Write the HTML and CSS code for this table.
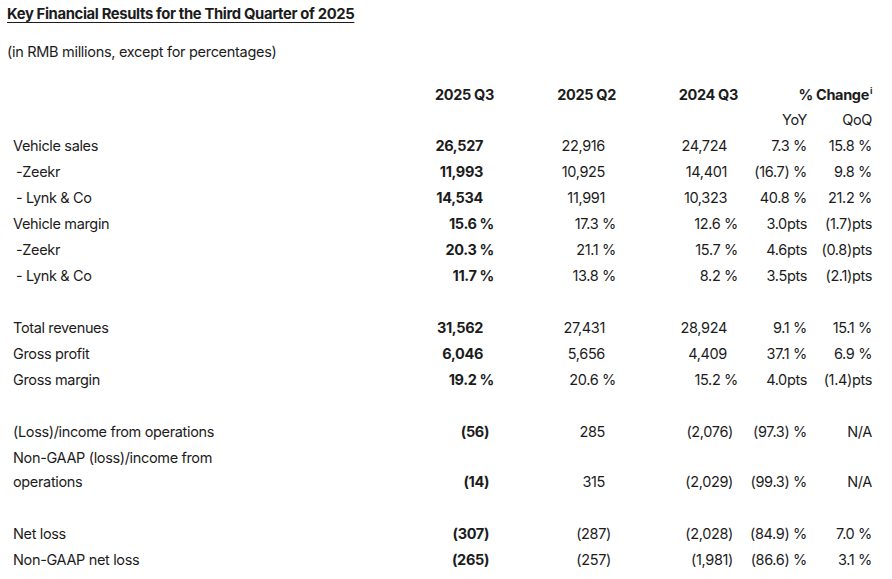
FILE: index.html
```html
<!DOCTYPE html>
<html lang="en">

<head>
    <meta charset="UTF-8">
    <meta name="viewport" content="width=device-width, initial-scale=1.0">
    <title>Key Financial Results</title>
    <link rel="stylesheet" href="styles.css">
</head>

<body>
    <h1 class="title">Key Financial Results for the Third Quarter of 2025</h1>
    <p class="unit">(in RMB millions, except for percentages)</p>

    <table class="results">
        <colgroup>
            <col class="c-label">
            <col class="c-q3">
            <col class="c-q2">
            <col class="c-ly">
            <col class="c-yoy">
            <col class="c-qoq">
        </colgroup>
        <tr class="head">
            <th></th>
            <th>2025 Q3</th>
            <th>2025 Q2</th>
            <th>2024 Q3</th>
            <th colspan="2">% Change<sup>i</sup></th>
        </tr>
        <tr class="subhead">
            <td></td>
            <td></td>
            <td></td>
            <td></td>
            <td>YoY</td>
            <td>QoQ</td>
        </tr>
        <tr>
            <td class="label">Vehicle sales</td>
            <td class="cur n">26,527</td>
            <td class="n">22,916</td>
            <td class="n">24,724</td>
            <td>7.3 %</td>
            <td>15.8 %</td>
        </tr>
        <tr>
            <td class="label sub">-Zeekr</td>
            <td class="cur n">11,993</td>
            <td class="n">10,925</td>
            <td class="n">14,401</td>
            <td>(16.7) %</td>
            <td>9.8 %</td>
        </tr>
        <tr>
            <td class="label sub">- Lynk &amp; Co</td>
            <td class="cur n">14,534</td>
            <td class="n">11,991</td>
            <td class="n">10,323</td>
            <td>40.8 %</td>
            <td>21.2 %</td>
        </tr>
        <tr>
            <td class="label">Vehicle margin</td>
            <td class="cur">15.6 %</td>
            <td>17.3 %</td>
            <td>12.6 %</td>
            <td>3.0pts</td>
            <td>(1.7)pts</td>
        </tr>
        <tr>
            <td class="label sub">-Zeekr</td>
            <td class="cur">20.3 %</td>
            <td>21.1 %</td>
            <td>15.7 %</td>
            <td>4.6pts</td>
            <td>(0.8)pts</td>
        </tr>
        <tr>
            <td class="label sub">- Lynk &amp; Co</td>
            <td class="cur">11.7 %</td>
            <td>13.8 %</td>
            <td>8.2 %</td>
            <td>3.5pts</td>
            <td>(2.1)pts</td>
        </tr>
        <tr class="gap">
            <td colspan="6"></td>
        </tr>
        <tr>
            <td class="label">Total revenues</td>
            <td class="cur n">31,562</td>
            <td class="n">27,431</td>
            <td class="n">28,924</td>
            <td>9.1 %</td>
            <td>15.1 %</td>
        </tr>
        <tr>
            <td class="label">Gross profit</td>
            <td class="cur n">6,046</td>
            <td class="n">5,656</td>
            <td class="n">4,409</td>
            <td>37.1 %</td>
            <td>6.9 %</td>
        </tr>
        <tr>
            <td class="label">Gross margin</td>
            <td class="cur">19.2 %</td>
            <td>20.6 %</td>
            <td>15.2 %</td>
            <td>4.0pts</td>
            <td>(1.4)pts</td>
        </tr>
        <tr class="gap">
            <td colspan="6"></td>
        </tr>
        <tr>
            <td class="label">(Loss)/income from operations</td>
            <td class="cur p">(56)</td>
            <td class="n">285</td>
            <td class="p">(2,076)</td>
            <td>(97.3) %</td>
            <td>N/A</td>
        </tr>
        <tr>
            <td class="label">Non-GAAP (loss)/income from operations</td>
            <td class="cur p">(14)</td>
            <td class="n">315</td>
            <td class="p">(2,029)</td>
            <td>(99.3) %</td>
            <td>N/A</td>
        </tr>
        <tr class="gap">
            <td colspan="6"></td>
        </tr>
        <tr>
            <td class="label">Net loss</td>
            <td class="cur p">(307)</td>
            <td class="p">(287)</td>
            <td class="p">(2,028)</td>
            <td>(84.9) %</td>
            <td>7.0 %</td>
        </tr>
        <tr>
            <td class="label">Non-GAAP net loss</td>
            <td class="cur p">(265)</td>
            <td class="p">(257)</td>
            <td class="p">(1,981)</td>
            <td>(86.6) %</td>
            <td>3.1 %</td>
        </tr>
    </table>
</body>

</html>
```

FILE: styles.css
```css
* {
    margin: 0;
    padding: 0;
}

body {
    background-color: #ffffff;
    color: #1c1c1c;
    font-family: Inter, "Noto Sans", Arial, sans-serif;
    font-size: 14.5px;
    letter-spacing: -0.35px;
}

.title {
    font-size: 14.8px;
    font-weight: 700;
    line-height: 20px;
    text-decoration: underline;
    text-underline-offset: 3px;
    margin: 4px 7px 0;
}

.unit {
    line-height: 20px;
    margin: 18px 7px 0;
    letter-spacing: -0.3px;
}

.results {
    margin-top: 20px;
    border-collapse: collapse;
    table-layout: fixed;
    width: 872px;
}

.c-label {
    width: 260px;
}

.c-q3 {
    width: 234px;
}

.c-q2,
.c-ly {
    width: 122px;
}

.c-yoy {
    width: 69px;
}

.c-qoq {
    width: 65px;
}

th,
td {
    padding: 1px 0;
    line-height: 24px;
    text-align: right;
    vertical-align: bottom;
    white-space: nowrap;
}

th {
    font-weight: 700;
}

th sup {
    font-size: 9px;
    vertical-align: 6px;
    line-height: 0;
    margin-left: 1px;
}

.subhead td {
    padding-top: 0;
}

td.label {
    text-align: left;
    white-space: normal;
    padding-left: 13px;
    padding-right: 30px;
}

td.sub {
    padding-left: 16px;
}

td.cur {
    font-weight: 700;
}

/* plain numbers sit left of the closing parenthesis and % signs */
td.n {
    padding-right: 11px;
}

td.p {
    padding-right: 5px;
}

.gap td {
    height: 24px;
}
```
